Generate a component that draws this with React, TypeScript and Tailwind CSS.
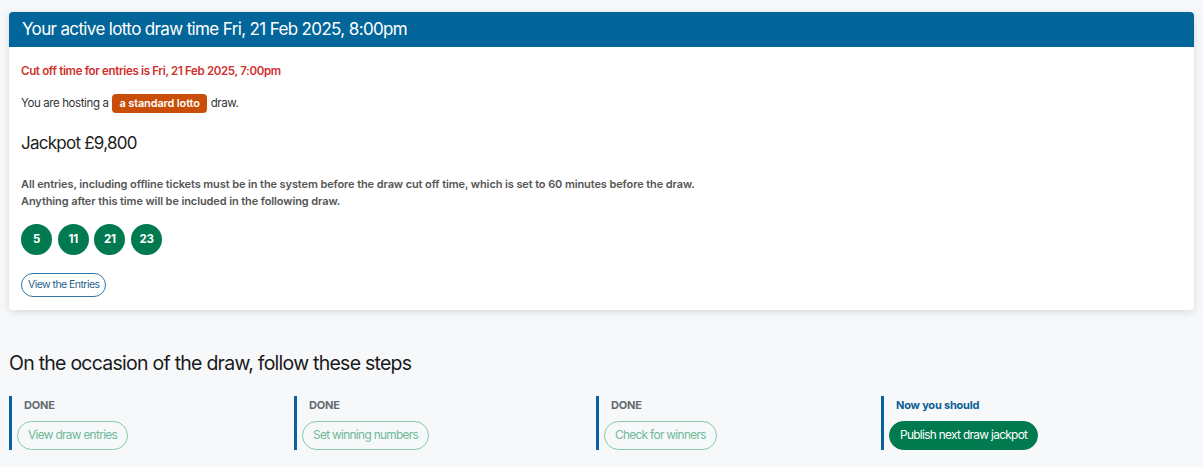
import React from "react";

export default function App() {
  const balls = [5, 11, 21, 23];
  const steps = [
    { label: "DONE", btn: "View draw entries", done: true },
    { label: "DONE", btn: "Set winning numbers", done: true },
    { label: "DONE", btn: "Check for winners", done: true },
    { label: "Now you should", btn: "Publish next draw jackpot", done: false },
  ];
  return (
    <div
      className="min-h-[467px] w-[1203px] bg-[#f6f8fa] pt-[12px] px-[9px]"
      style={{ fontFamily: "Inter, 'Liberation Sans', sans-serif" }}
    >
      <div className="w-[1185px] overflow-hidden rounded-[4px] bg-white shadow-[0_2px_8px_rgba(0,0,0,0.13)]">
        <div className="flex h-[35px] items-center bg-[#02669a] px-[13px] text-[17px] leading-none tracking-[-0.64px] text-white">
          Your active lotto draw time Fri, 21 Feb 2025, 8:00pm
        </div>
        <div className="px-[12px] pt-[17px] pb-[13px]">
          <div className="text-[11.5px] font-semibold leading-[14px] tracking-[-0.33px] text-[#d0302c]">
            Cut off time for entries is Fri, 21 Feb 2025, 7:00pm
          </div>
          <div className="mt-[16px] flex items-center text-[11.5px] leading-[19px] tracking-[-0.4px] text-[#333]">
            <span>You are hosting a</span>
            <span className="mx-[4px] rounded-[4px] bg-[#c84e0a] px-[7px] text-[11px] font-semibold leading-[19px] tracking-[-0.15px] text-white">
              a standard lotto
            </span>
            <span>draw.</span>
          </div>
          <div className="mt-[19px] text-[17px] leading-[22px] tracking-[-0.75px] text-[#222]">
            Jackpot £9,800
          </div>
          <div className="mt-[22px] text-[11px] font-semibold leading-[17px] tracking-[-0.1px] text-[#555]">
            <div>
              All entries, including offline tickets must be in the system before the draw cut off time, which is set to 60 minutes before the draw.
            </div>
            <div>Anything after this time will be included in the following draw.</div>
          </div>
          <div className="mt-[14px] flex gap-[5.7px]">
            {balls.map((b) => (
              <div
                key={b}
                className="flex h-[31px] w-[31px] items-center justify-center rounded-full bg-[#017a4f] text-[11.5px] font-bold tracking-[-0.3px] text-white"
              >
                {b}
              </div>
            ))}
          </div>
          <div className="mt-[15px]">
            <button className="h-[24px] rounded-full border border-[#2e77a8] bg-white px-[6px] text-[10.5px] tracking-[-0.55px] text-[#1f5f8e]">
              View the Entries
            </button>
          </div>
        </div>
      </div>

      <div className="mt-[41px] text-[19.5px] leading-[24px] tracking-[-0.75px] text-[#1a1a1a]">
        On the occasion of the draw, follow these steps
      </div>

      <div className="mt-[21px] grid grid-cols-[285px_302px_285px_1fr]">
        {steps.map((s, i) => (
          <div key={i} className="flex flex-col items-start border-l-[3px] border-[#0b62a0] pl-[5px]">
            <div
              className={
                "pl-[7px] pt-[1px] text-[11px] font-bold leading-[17px] tracking-[-0.2px] " +
                (s.done ? "text-[#666b70]" : "text-[#0b5f95]")
              }
            >
              {s.label}
            </div>
            <button
              className={
                s.done
                  ? "mt-[7px] h-[29px] rounded-full border border-[#87c9ad] bg-transparent px-[10px] text-[11.8px] tracking-[-0.65px] text-[#6fb898]"
                  : "mt-[7px] h-[29px] rounded-full border border-[#017a4f] bg-[#017a4f] px-[10px] text-[11.8px] tracking-[-0.65px] text-white"
              }
            >
              {s.btn}
            </button>
          </div>
        ))}
      </div>
    </div>
  );
}
